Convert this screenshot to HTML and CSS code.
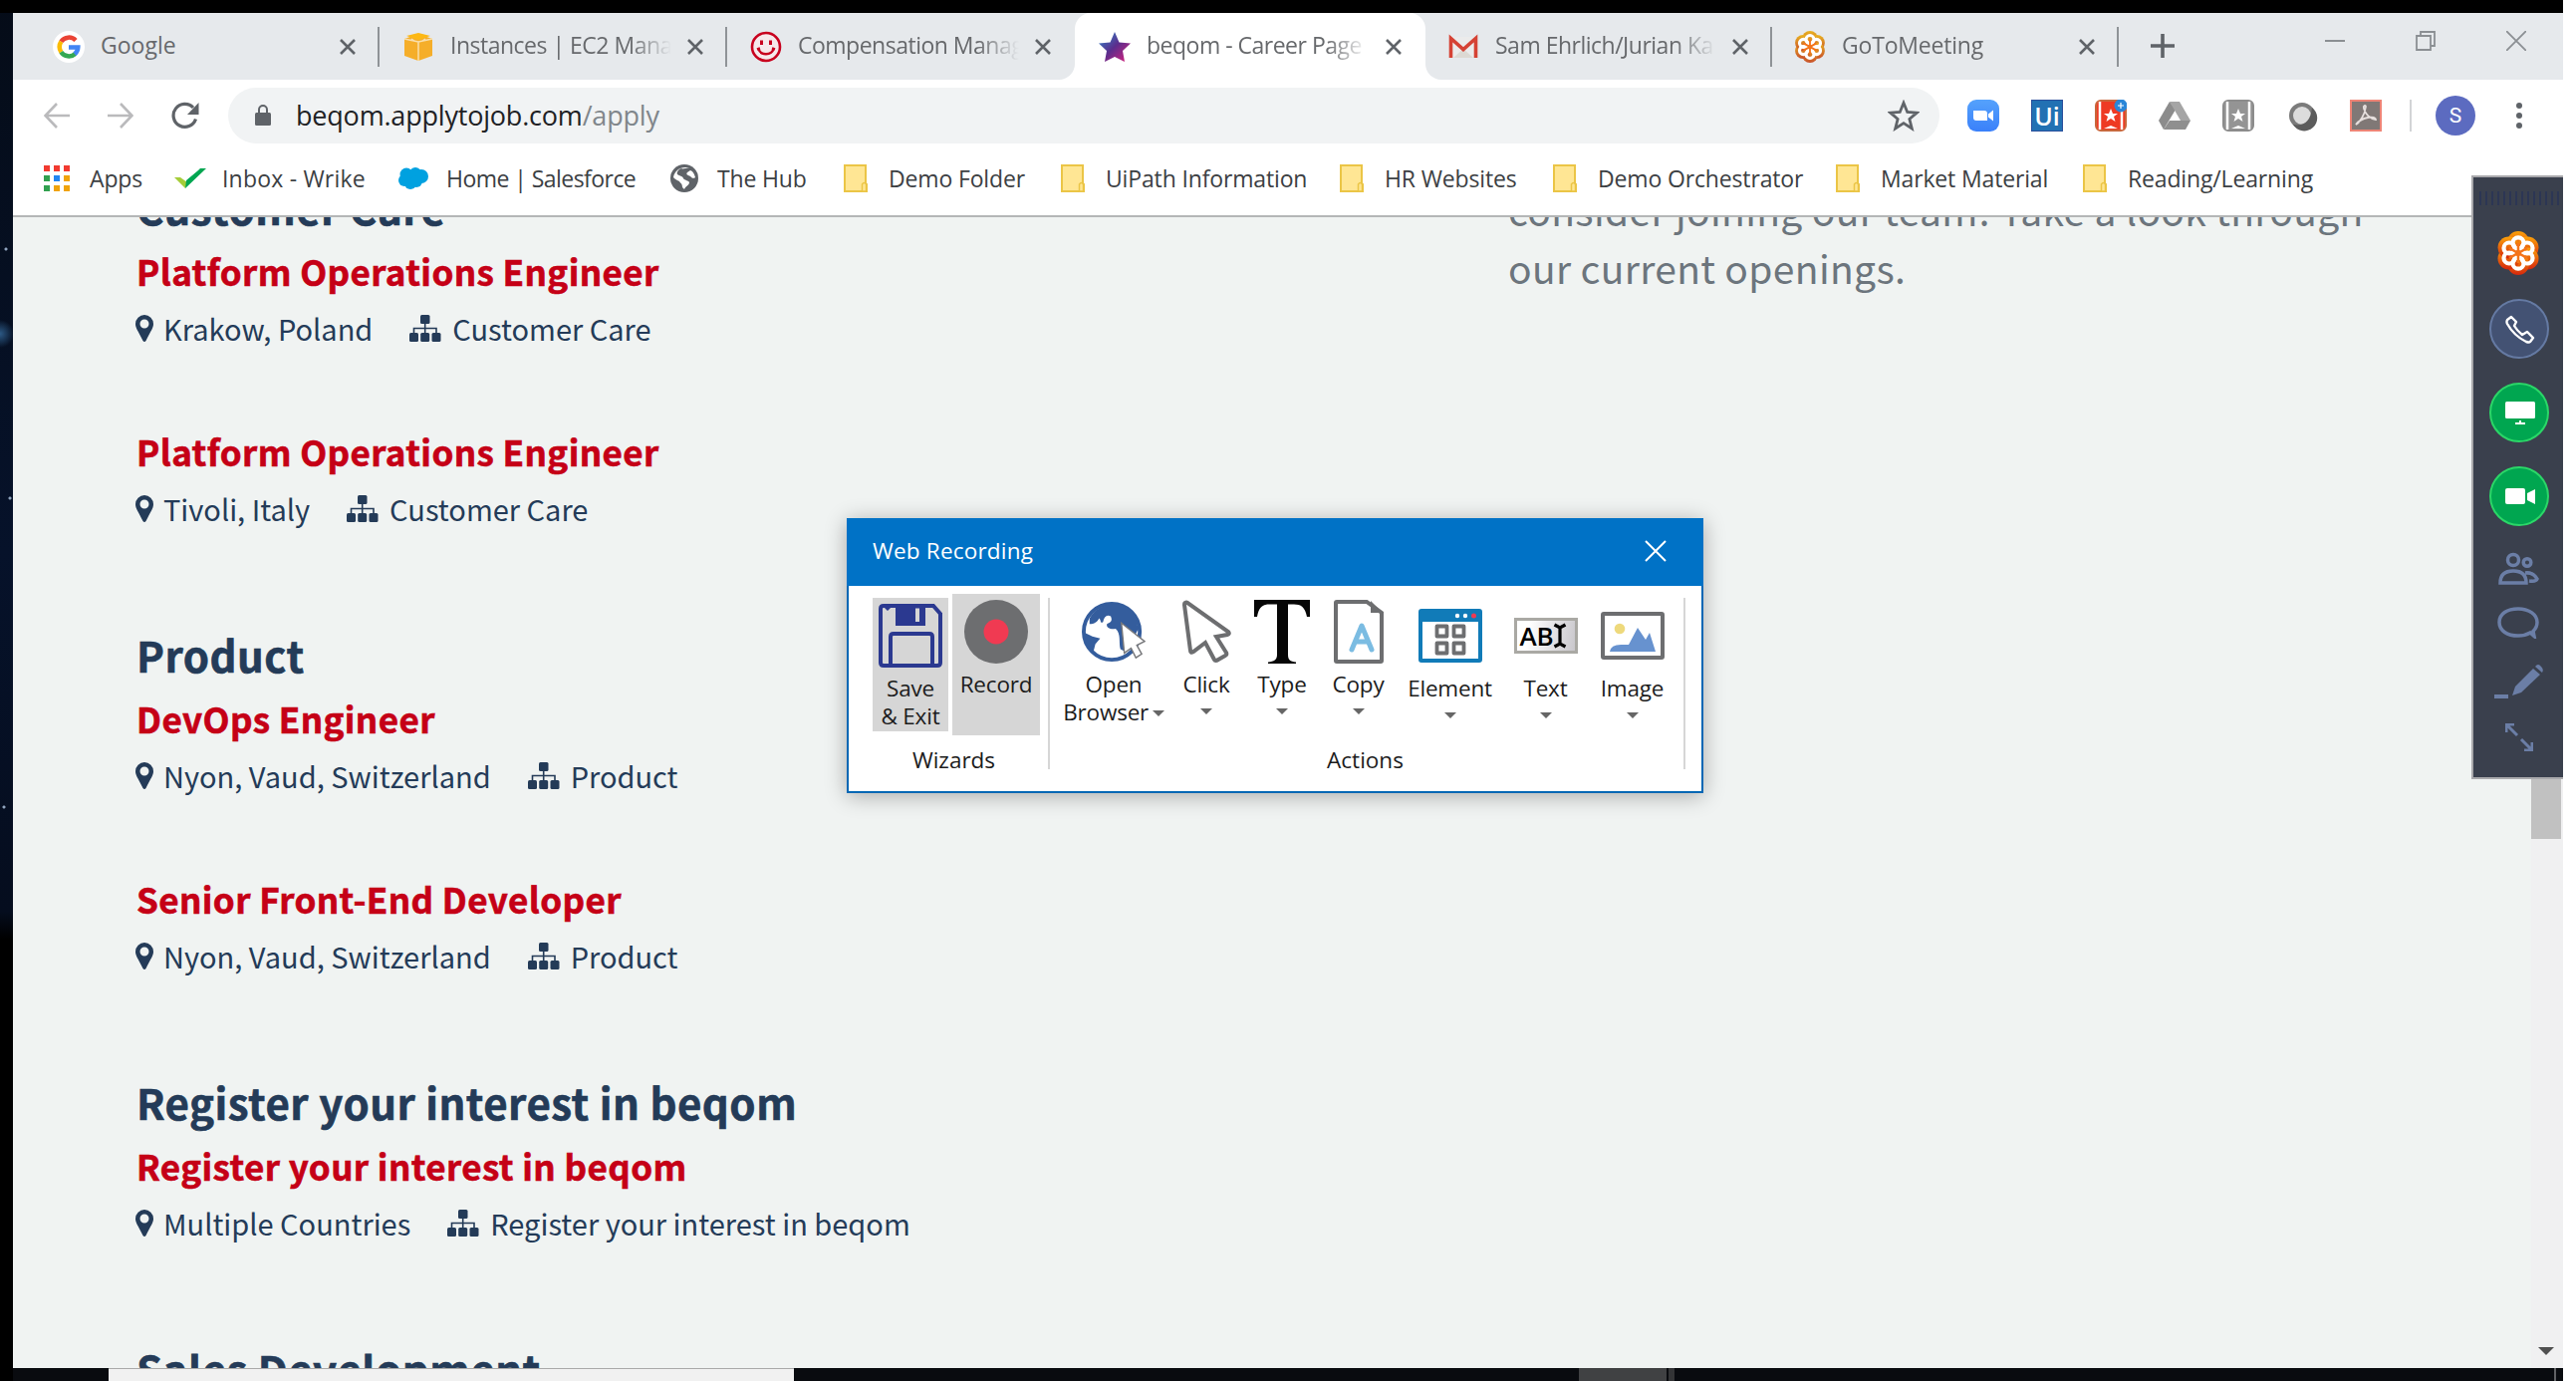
FILE: index.html
```html
<!DOCTYPE html>
<html lang="en">
<head>
<meta charset="utf-8">
<title>beqom - Career Page</title>
<link rel="stylesheet" href="styles.css">
</head>
<body>
<svg class="defs" width="0" height="0">
  <defs>
    <linearGradient id="orange" x1="0" y1="0" x2="0" y2="1"><stop offset="0" stop-color="#fca30a"/><stop offset="1" stop-color="#d5260c"/></linearGradient>
    <linearGradient id="gold" x1="0" y1="0" x2="0" y2="1"><stop offset="0" stop-color="#e9b320"/><stop offset="1" stop-color="#c8502b"/></linearGradient>
    <linearGradient id="purple" x1="0" y1="0" x2="1" y2="1"><stop offset="0" stop-color="#2b8fd0"/><stop offset=".5" stop-color="#5c2d8c"/><stop offset="1" stop-color="#e0207c"/></linearGradient>
    <linearGradient id="blue" x1="0" y1="0" x2="0" y2="1"><stop offset="0" stop-color="#55a2fc"/><stop offset="1" stop-color="#3a80fa"/></linearGradient>
    <symbol id="x" viewBox="0 0 16 16"><path d="M1 1L15 15M15 1L1 15" stroke="#5f6368" stroke-width="2.6"/></symbol>
    <symbol id="folder" viewBox="0 0 24 28"><path d="M1 1h21v18l1 1v7H1z" fill="#ffe694" stroke="#ebc546" stroke-width="2"/><path d="M18.500 27v-7q2-3 4 0v7z" fill="#ffe694" stroke="#ebc546" stroke-width="1.500"/></symbol>
    <symbol id="pin" viewBox="0 0 18 27"><path fill-rule="evenodd" d="M9 0a9 9 0 0 1 9 9c0 4-2 6-7.500 17q-1.500 2-3 0C2 15 0 13 0 9a9 9 0 0 1 9-9zM9 4.500a4.500 4.500 0 1 0 0 9 4.500 4.500 0 0 0 0-9z" fill="#243b58"/></symbol>
    <symbol id="org" viewBox="0 0 32 27"><g fill="#243b58"><rect x="11" y="0" width="9.500" height="9" rx="1.500"/><rect x="0" y="18" width="9" height="9" rx="1.500"/><rect x="11.200" y="18" width="9" height="9" rx="1.500"/><rect x="22.500" y="18" width="9" height="9" rx="1.500"/></g><path d="M15.700 8v10M4.500 18v-4.500h22.500V18" fill="none" stroke="#243b58" stroke-width="1.600"/></symbol>
    <symbol id="daisy" viewBox="0 0 44 44">
      <g><circle cx="22" cy="11" r="11"/><circle cx="31.500" cy="16.500" r="11"/><circle cx="31.500" cy="27.500" r="11"/><circle cx="22" cy="33" r="11"/><circle cx="12.500" cy="27.500" r="11"/><circle cx="12.500" cy="16.500" r="11"/></g>
      <g fill="none" stroke="#fff" stroke-width="4.200"><circle cx="22" cy="11.800" r="5.500"/><circle cx="31" cy="17" r="5.500"/><circle cx="31" cy="27" r="5.500"/><circle cx="22" cy="32.200" r="5.500"/><circle cx="13" cy="27" r="5.500"/><circle cx="13" cy="17" r="5.500"/></g>
      <path d="M22 12V32M13 17l18 10M31 17L13 27" stroke="#f4741a" stroke-width="2.500"/>
    </symbol>
  </defs>
</svg>

<div class="desktop">
<div class="browser">
  <div class="tabs">
    <div class="tab first">
      <svg class="fav" viewBox="0 0 32 32"><circle cx="16" cy="16" r="16" fill="#fff"/><g fill="none" stroke-width="4.500"><path d="M8.300 10.800A9.500 9.500 0 0 1 23 9.500" stroke="#ea4335"/><path d="M8.300 21.200A9.800 9.800 0 0 1 8.300 10.800" stroke="#fbbc05"/><path d="M22.500 23A9.500 9.500 0 0 1 8.300 21.200" stroke="#34a853"/><path d="M16 16.500h9.300A9.500 9.500 0 0 1 22 23.300" stroke="#4285f4"/></g></svg>
      <span class="title">Google</span><svg class="close"><use href="#x"/></svg>
    </div>
    <div class="tab">
      <svg class="fav" viewBox="0 0 32 32"><path d="M2 8l14-5 14 5v17l-14 5-14-5z" fill="#f5ae2a"/><path d="M4 5l12-3 12 3-12 4z" fill="#fdb813"/><path d="M2 8l14 3 14-3M16 11v19M9 8l3 2M23 8l-3 2" stroke="#f9dfac" stroke-width="1.500" fill="none"/></svg>
      <span class="title">Instances | EC2 Mana</span><svg class="close"><use href="#x"/></svg>
    </div>
    <div class="tab nosep">
      <svg class="fav" viewBox="0 0 32 32"><circle cx="16" cy="16" r="14" fill="#f6e9eb" stroke="#c8001e" stroke-width="2.600"/><path d="M11.500 9.500v4.500M20.500 9.500v4.500" stroke="#c8001e" stroke-width="3"/><path d="M8.500 18c2 7 13 7 15 0M7 18.500l3-1M25 18.500l-3-1" fill="none" stroke="#c8001e" stroke-width="2.500"/></svg>
      <span class="title">Compensation Manag</span><svg class="close"><use href="#x"/></svg>
    </div>
    <div class="tab active">
      <svg class="fav" viewBox="0 0 32 32"><path d="M16 1l4.500 10.500L32 12.500l-8 7.500 2 11-10-5-10 5 2-11-8-7.500 11.500-1z" fill="url(#purple)"/></svg>
      <span class="title">beqom - Career Page</span><svg class="close"><use href="#x"/></svg>
    </div>
    <div class="tab">
      <svg class="fav" viewBox="0 0 32 32"><path d="M4 6h24v21H4z" fill="#ebebeb"/><path d="M6 27l10-9 10 9z" fill="#dcd9d3"/><path d="M3.500 27V7.500L16 18.500 28.500 7.500V27" fill="none" stroke="#d54234" stroke-width="3.600"/></svg>
      <span class="title">Sam Ehrlich/Jurian Ka</span><svg class="close"><use href="#x"/></svg>
    </div>
    <div class="tab last">
      <svg class="fav" fill="url(#gold)"><use href="#daisy"/></svg>
      <span class="title">GoToMeeting</span><svg class="close"><use href="#x"/></svg>
    </div>
    <svg class="plus" viewBox="0 0 24 24"><path d="M12 0v24M0 12h24" stroke="#5f6368" stroke-width="3.600"/></svg>
    <div class="winctl">
      <svg viewBox="0 0 20 20"><path d="M0 10h20" stroke="#8b8f93" stroke-width="2"/></svg>
      <svg viewBox="0 0 20 20"><path d="M1 5h14v14H1zM5 5V1h14v14h-4" fill="none" stroke="#8b8f93" stroke-width="1.800"/></svg>
      <svg viewBox="0 0 20 20"><path d="M0 0l20 20M20 0L0 20" stroke="#8b8f93" stroke-width="1.800"/></svg>
    </div>
  </div>

  <div class="toolbar">
    <svg class="nav" viewBox="0 0 26 26"><path d="M26 13H2M13 1L1.500 13 13 25" fill="none" stroke="#bababc" stroke-width="2.600"/></svg>
    <svg class="nav" viewBox="0 0 26 26"><path d="M0 13h24M13 1l11.500 12L13 25" fill="none" stroke="#bababc" stroke-width="2.600"/></svg>
    <svg class="nav reload" viewBox="0 0 28 28"><path d="M24.500 17.500A11.500 11.500 0 1 1 22 6" fill="none" stroke="#5f6368" stroke-width="3.200"/><path d="M27.500 1v12H16z" fill="#5f6368"/></svg>
    <div class="omnibox">
      <svg class="lock" viewBox="0 0 16 22"><rect y="8" width="16" height="13" rx="1.500" fill="#5f6368"/><path d="M4 9V5a4 4 0 0 1 8 0v4" fill="none" stroke="#5f6368" stroke-width="2"/></svg>
      <span class="url"><b>beqom.applytojob.com</b>/apply</span>
      <svg class="star" viewBox="0 0 30 30"><path d="M15 3l3.500 8.700 9 .6-7 5.900 2.300 9L15 22.200 7.200 27.200l2.300-9-7-5.900 9-.6z" fill="none" stroke="#5f6368" stroke-width="2.600"/></svg>
    </div>
    <div class="exts">
      <svg viewBox="0 0 32 32"><rect width="32" height="32" rx="9" fill="url(#blue)"/><path d="M6 11h11q3 0 3 3v7H9q-3 0-3-3zM21 14.500l5-4v11l-5-4z" fill="#fff"/></svg>
      <span class="ui">Ui</span>
      <svg viewBox="0 0 32 32"><rect x="1" y="1" width="30" height="30" rx="5" fill="#ee3a23" stroke="#c9673c" stroke-width="2"/><path d="M5 2v28M27 2v28" stroke="#fff" stroke-width="2.500"/><path d="M16 9l2 5h5l-4 3 1.500 5-4.500-3-4.500 3L13 17l-4-3h5zM9 29l7-3 7 3z" fill="#fff"/><circle cx="26" cy="6" r="6.500" fill="#2a86d8"/><path d="M26 3v6M23 6h6" stroke="#fff" stroke-width="1.200"/></svg>
      <svg viewBox="0 0 32 32"><path d="M11 2L0 21l5 9L17 10z" fill="#8c8c8c"/><path d="M11 2h10l11 19H22z" fill="#a5a5a5"/><path d="M5 30l6-9h21l-5 9z" fill="#8f8f8f"/></svg>
      <svg viewBox="0 0 32 32"><rect x="1" y="1" width="30" height="30" rx="5" fill="#949494" stroke="#8c8c8c" stroke-width="2"/><path d="M5 2v28M27 2v28" stroke="#fff" stroke-width="2.500"/><path d="M16 9l2 5h5l-4 3 1.500 5-4.500-3-4.500 3L13 17l-4-3h5zM9 29l7-3 7 3z" fill="#fff"/></svg>
      <svg viewBox="0 0 32 32"><circle cx="16" cy="16" r="11" fill="#dcdcdc" stroke="#7b7b7b" stroke-width="4"/><path d="M26 8a13 13 0 1 1-19 17q17 3 19-17z" fill="#5c5c5c"/></svg>
      <svg viewBox="0 0 32 32"><rect x="1" y="1" width="30" height="30" fill="#807876" stroke="#ee8476" stroke-width="2"/><path d="M6 25c4-2 9-10 10-18 0-2-3-1-2 2 2 6 6 10 12 11 0-2-3-3-8-2s-9 3-12 7z" fill="none" stroke="#e6dfdd" stroke-width="1.800"/></svg>
      <i class="divider"></i>
      <span class="avatar">S</span>
      <svg class="dots" viewBox="0 0 6 28"><g fill="#5f6368"><circle cx="3" cy="4" r="3"/><circle cx="3" cy="14" r="3"/><circle cx="3" cy="24" r="3"/></g></svg>
    </div>
  </div>

  <div class="bookmarks">
    <svg class="b1" viewBox="0 0 26 26"><path d="M0 0h6v6H0zM10 0h6v6h-6zM20 0h6v6h-6z" fill="#f23a30"/><path d="M0 10h6v6H0zM0 20h6v6H0z" fill="#31a04f"/><path d="M10 10h6v6h-6z" fill="#2286f2"/><path d="M20 10h6v6h-6zM10 20h6v6h-6zM20 20h6v6h-6z" fill="#f0a30a"/></svg><span>Apps</span>
    <svg class="b2" viewBox="0 0 32 20"><path d="M0 9h6l7 5-2 6z" fill="#a5cd39"/><path d="M11 20l1-8L24 2l2-2h6z" fill="#00a651"/></svg><span class="wide">Inbox - Wrike</span>
    <svg class="b3" viewBox="0 0 30 22"><g fill="#00a1e0"><circle cx="8" cy="7" r="6.500"/><circle cx="17" cy="6" r="6"/><circle cx="23" cy="9" r="7"/><circle cx="6" cy="13" r="6"/><circle cx="12" cy="16" r="6"/><circle cx="18" cy="14" r="6"/></g></svg><span class="narrow">Home | Salesforce</span>
    <svg class="b4" viewBox="0 0 28 28"><circle cx="14" cy="14" r="14" fill="#5f6368"/><path d="M19 3c-4 1-7 2-8 1-3 1-5 4-4 6 2 2 5 1 6 4 1 2 5 2 6 4 0 3-4 4-5 7l-2-2c0-4-2-4-3-6-3-1-5-3-6-4 1-6 6-10 12-10zM20 6c3 1 4 4 5 7-2 2-4 0-5-1-2-1-5-2-3-4z" fill="#fff"/></svg><span>The Hub</span>
    <svg class="f"><use href="#folder"/></svg><span>Demo Folder</span>
    <svg class="f"><use href="#folder"/></svg><span>UiPath Information</span>
    <svg class="f"><use href="#folder"/></svg><span>HR Websites</span>
    <svg class="f"><use href="#folder"/></svg><span>Demo Orchestrator</span>
    <svg class="f"><use href="#folder"/></svg><span>Market Material</span>
    <svg class="f"><use href="#folder"/></svg><span>Reading/Learning</span>
    <span class="more">»</span>
  </div>

  <div class="page">
    <main class="jobs">
      <section>
        <h2>Customer Care</h2>
        <article><h3>Platform Operations Engineer</h3><p><svg class="pin"><use href="#pin"/></svg><span>Krakow, Poland</span><svg class="org"><use href="#org"/></svg><span>Customer Care</span></p></article>
        <article><h3>Platform Operations Engineer</h3><p><svg class="pin"><use href="#pin"/></svg><span>Tivoli, Italy</span><svg class="org"><use href="#org"/></svg><span>Customer Care</span></p></article>
      </section>
      <section>
        <h2>Product</h2>
        <article><h3>DevOps Engineer</h3><p><svg class="pin"><use href="#pin"/></svg><span>Nyon, Vaud, Switzerland</span><svg class="org"><use href="#org"/></svg><span>Product</span></p></article>
        <article><h3>Senior Front-End Developer</h3><p><svg class="pin"><use href="#pin"/></svg><span>Nyon, Vaud, Switzerland</span><svg class="org"><use href="#org"/></svg><span>Product</span></p></article>
      </section>
      <section>
        <h2>Register your interest in beqom</h2>
        <article><h3>Register your interest in beqom</h3><p><svg class="pin"><use href="#pin"/></svg><span>Multiple Countries</span><svg class="org"><use href="#org"/></svg><span>Register your interest in beqom</span></p></article>
      </section>
      <section>
        <h2>Sales Development</h2>
      </section>
    </main>
    <aside class="intro">consider joining our team! Take a look through<br>our current openings.</aside>
    <div class="scrollbar"><i class="thumb"></i><i class="down"></i></div>
  </div>
</div>
<div class="taskbar"><i class="t1"></i><i class="t2"></i><i class="t3"></i><i class="t4"></i></div>
</div>

<div class="dialog">
  <header><span>Web Recording</span><svg viewBox="0 0 22 22"><path d="M1 1l20 20M21 1L1 21" stroke="#fff" stroke-width="2"/></svg></header>
  <div class="ribbon">
    <div class="group wizards">
      <div class="items">
        <div class="cmd save">
          <svg viewBox="0 0 64 64"><path d="M5 2h50l7 8v49q0 3-3 3H5q-3 0-3-3V5q0-3 3-3z" fill="none" stroke="#2b3990" stroke-width="4"/><path d="M17 2h30v20H17zM4 2h10L9 7z" fill="#2b3990"/><path d="M37 4.500h4V18h-4z" fill="#d6d6d6"/><path d="M12 62V33q0-3 3-3h36q3 0 3 3v29" fill="none" stroke="#2b3990" stroke-width="4"/></svg>
          <span>Save<br>&amp; Exit</span>
        </div>
        <div class="cmd record">
          <svg viewBox="0 0 64 64"><circle cx="32" cy="32" r="32" fill="#6d6e70"/><circle cx="32" cy="32" r="12.500" fill="#f03a52"/></svg>
          <span>Record</span>
        </div>
      </div>
      <div class="caption">Wizards</div>
    </div>
    <div class="group actions">
      <div class="items">
        <div class="cmd open">
          <svg viewBox="0 0 66 64"><circle cx="31" cy="32" r="29" fill="#fff" stroke="#345d9d" stroke-width="4"/><path d="M8 18C15 6 26 3 36 4c13 1 22 11 22 26l-7 14-7-8v16l-4-2c-2-6 1-16-5-21-5 1-10-1-9-5 4-2 6-3 4-8-4-2-7 0-8 6-3 2-2-2-4-4-2 4-5 6-10 6zM3 33l8 4 8 2-5 6-2 8C6 49 3 40 3 33z" fill="#345d9d"/><path d="M41 23l3 31 7-5 5 10 6-4-5-9 8-4z" fill="#fff" stroke="#77787b" stroke-width="1.500"/></svg>
          <span>Open<br>Browser <i class="arrow"></i></span>
        </div>
        <div class="cmd click">
          <svg viewBox="0 0 64 64"><path d="M11 3q-1 0-1 2l6 46q0 3 3 1l12-9 9 17q1 2 4 0l7-4q2-1 1-3l-10-16 11-2q3-1 1-3L13 3q-1-1-2 0z" fill="#fff" stroke="#6d6e70" stroke-width="4"/></svg>
          <span>Click</span><i class="arrow"></i>
        </div>
        <div class="cmd type">
          <svg viewBox="0 0 64 64"><path d="M4 0h56v17h-3C55 7 51 4.500 44 4.500h-6V55c0 5 2 7 8 7.500V64H18v-1.500c6-.5 9-2.500 9-7.500V4.500h-7C12 4.500 9 7 7 17H4z" fill="#060606"/></svg>
          <span>Type</span><i class="arrow"></i>
        </div>
        <div class="cmd copy">
          <svg viewBox="0 0 64 64"><path d="M10 2h30l15 11v48q0 1-1 1H10q-1 0-1-1V3q0-1 1-1z" fill="#fff" stroke="#6d6e70" stroke-width="4"/><path d="M44 1v12h12z" fill="#6d6e70"/><path d="M25 50l10-24 10 24M29 42h12" fill="none" stroke="#7bbce2" stroke-width="5" stroke-linecap="round" stroke-linejoin="round"/></svg>
          <span>Copy</span><i class="arrow"></i>
        </div>
        <div class="cmd low element">
          <svg viewBox="0 0 64 64"><rect x="2" y="7" width="60" height="50" rx="1" fill="#fff" stroke="#117bb8" stroke-width="4"/><path d="M1 6h62v12H1z" fill="#117bb8"/><circle cx="39" cy="12" r="2.200" fill="#fff"/><circle cx="47" cy="12" r="2.200" fill="#fff"/><circle cx="55.500" cy="12" r="2.500" fill="#f03a52"/><path d="M18.500 22.500h10v10h-10zM35.500 22.500h10v10h-10zM18.500 39.500h10v10h-10zM35.500 39.500h10v10h-10z" fill="none" stroke="#6d6e70" stroke-width="3.800" stroke-linejoin="round"/></svg>
          <span>Element</span><i class="arrow"></i>
        </div>
        <div class="cmd low text">
          <div class="abi"><b>AB</b><svg viewBox="0 0 14 28"><path d="M1.500 3L7 6l5.500-3M1.500 25L7 22l5.500 3M7 5v18" fill="none" stroke="#000" stroke-width="3.200"/></svg></div>
          <span>Text</span><i class="arrow"></i>
        </div>
        <div class="cmd low image">
          <svg viewBox="0 0 64 64"><rect x="2" y="10" width="60" height="44" rx="1" fill="#fff" stroke="#6d6e70" stroke-width="4"/><circle cx="19" cy="25" r="5.300" fill="#eed97c"/><path d="M9 48q1-8 14-7h5l9-17 8 12 4-7 6 19z" fill="#6792cf"/></svg>
          <span>Image</span><i class="arrow"></i>
        </div>
      </div>
      <div class="caption">Actions</div>
    </div>
  </div>
</div>

<div class="panel">
  <i class="grip"></i>
  <svg class="logo" fill="url(#orange)"><use href="#daisy"/></svg>
  <svg class="round" viewBox="0 0 60 60"><circle cx="30" cy="30" r="29" fill="#435273" stroke="#657aa3" stroke-width="2"/><path d="M22 18l-4 3q-1 2 0 4c5 9 11 14 19 18q3 1 4 0l3-4-6-6-5 3q-5-4-8-9l2-4z" fill="none" stroke="#fff" stroke-width="2.400" stroke-linejoin="round"/></svg>
  <svg class="round" viewBox="0 0 60 60"><circle cx="30" cy="30" r="29" fill="#00a650" stroke="#2bd768" stroke-width="2"/><rect x="16" y="19" width="30" height="17" rx="1.500" fill="#fff"/><path d="M30 38h2v2h4v2H26v-2h4z" fill="#fff"/></svg>
  <svg class="round" viewBox="0 0 60 60"><circle cx="30" cy="30" r="29" fill="#00a650" stroke="#2bd768" stroke-width="2"/><rect x="16" y="22" width="20" height="16" rx="2" fill="#fff"/><path d="M38 27l8-4v15l-8-4z" fill="#fff"/></svg>
  <svg class="people" viewBox="0 0 42 34"><g fill="none" stroke="#6b7ea6" stroke-width="3.500"><circle cx="15" cy="8" r="5.500"/><circle cx="29" cy="10.500" r="3.800"/><path d="M2 31q0-12 13-12t13 12zM27 21q8-1 12 6-1 3-8 2"/></g></svg>
  <svg class="bubble" viewBox="0 0 42 32"><path d="M33 26Q28 29 21 29C10 29 2 24 2 15.500S10 2 21 2s19 6 19 13.500q0 5-4 9l1 5z" fill="none" stroke="#6b7ea6" stroke-width="3.500"/></svg>
  <svg class="pencil" viewBox="0 0 50 36"><path d="M0 31h14v4H0zM18 32l3-9L39 5l7 6-19 18zM41 3q3-4 6 0 3 3 1 6z" fill="#6b7ea6"/></svg>
  <svg class="expand" viewBox="0 0 28 28"><path d="M1 9V1h8M2 2l10 10M27 19v8h-8M26 26L16 16" fill="none" stroke="#6b7ea6" stroke-width="3"/></svg>
</div>
</body>
</html>
```
FILE: styles.css
```css
* { box-sizing: border-box; }
body { margin: 0; width: 2586px; height: 1386px; overflow: hidden; background: #fff; font-family: "Open Sans", "Noto Sans", sans-serif; position: relative; }
svg { display: block; flex: none; }
i { display: block; }
.defs { position: absolute; }

.desktop { width: 2573px; height: 1386px; padding: 13px 0 0 13px; background:
  linear-gradient(#000 13px, transparent 13px),
  radial-gradient(circle at 0 335px, #2d5a86, transparent 14px),
  radial-gradient(circle at 6px 250px, #8fa3bd 1px, transparent 2px),
  radial-gradient(circle at 10px 500px, #8fa3bd 1px, transparent 2px),
  radial-gradient(circle at 4px 810px, #8fa3bd 1px, transparent 2px),
  linear-gradient(#050c18, #06122a 40%, #050d1e 66%, #000 68%); }
.browser { width: 2560px; height: 1360px; display: flex; flex-direction: column; background: #fff; overflow: hidden; }

/* tab strip */
.tabs { height: 67px; flex: none; display: flex; align-items: stretch; background: linear-gradient(#e6e9ec, #e6e9ec) 0 0 / 100% 50px no-repeat, linear-gradient(90deg, #e6e9ec 1040px, #fff 1040px, #fff 1440px, #e6e9ec 1440px); }
.tab { width: 349px; height: 67px; display: flex; align-items: center; padding: 0 22px 0 23px; color: #67696c; font-size: 23px; letter-spacing: -.5px; background: linear-gradient(#8f9397, #8f9397) right 14px / 2px 40px no-repeat; flex: none; }
.tab.first { width: 368px; padding-left: 40px; letter-spacing: 0; }
.tab.nosep { background: #e6e9ec; border-radius: 0 0 16px 0; }
.tab.active { width: 352px; background: #fff; border-radius: 16px 16px 0 0; padding-left: 24px; }
.tab.active + .tab { width: 348px; padding-left: 22px; border-radius: 0 0 0 16px; background-color: #e6e9ec; }
.tab.last { width: 348px; padding-left: 22px; letter-spacing: -.2px; }
.fav { width: 32px; height: 32px; }
.title { flex: 1; margin: 0 12px 3px 16px; white-space: nowrap; overflow: hidden; mask-image: linear-gradient(90deg, #000 180px, transparent 222px); }
.first .title { mask-image: none; }
.close { width: 16px; height: 16px; margin-right: 2px; }
.plus { width: 24px; height: 24px; margin: 21px 0 0 32px; }
.winctl { display: flex; gap: 71px; margin: 18px 0 0 151px; }
.winctl svg { width: 20px; height: 20px; }

/* toolbar */
.toolbar { height: 71px; flex: none; display: flex; align-items: center; padding: 0 0 0 31px; }
.nav { width: 26px; height: 26px; margin-right: 38px; }
.nav.reload { width: 28px; height: 28px; margin-right: 29px; }
.omnibox { width: 1718px; height: 56px; margin-top: 1px; border-radius: 28px; background: #f1f3f4; display: flex; align-items: center; padding: 0 20px 0 27px; }
.lock { width: 16px; height: 22px; margin-right: 25px; }
.url { flex: 1; font-size: 27px; letter-spacing: -.2px; color: #80868b; margin-top: -2px; }
.url b { font-weight: 400; color: #202124; }
.star { width: 32px; height: 32px; }
.exts { display: flex; align-items: center; gap: 32px; margin-left: 28px; }
.exts > svg { width: 32px; height: 32px; }
.ui { width: 32px; height: 32px; background: #2271b3; border: 1px solid #2a4f9c; color: #fff; font: 600 25px/30px "Open Sans", sans-serif; text-align: center; }
.divider { width: 2px; height: 32px; background: #d2d4d6; margin-left: -4px; }
.avatar { width: 40px; height: 40px; border-radius: 50%; background: #5c6bc0; color: #fff; font: 21px/40px Roboto, sans-serif; text-align: center; margin-left: -8px; }
.exts > .dots { width: 6px; height: 28px; margin-left: 9px; }

/* bookmarks */
.bookmarks { height: 67px; flex: none; display: grid; grid-template-columns: 46px 85px 48px 177px 48px 225px 47px 127px 45px 173px 45px 235px 45px 169px 45px 239px 45px 203px 45px 378px 60px; align-items: center; padding: 0 0 9px 31px; border-bottom: 2px solid #b4b6b7; font-size: 23px; letter-spacing: -.15px; color: #3c4043; white-space: nowrap; }
.bookmarks span { margin-top: -1px; }
.bookmarks .wide { letter-spacing: .2px; }
.bookmarks .narrow { letter-spacing: -.55px; }
.b1 { width: 26px; height: 26px; } .b2 { width: 32px; height: 20px; } .b3 { width: 30px; height: 22px; } .b4 { width: 28px; height: 28px; } .f { width: 24px; height: 28px; }

/* career page */
.page { flex: 1; min-height: 0; display: flex; background: #f0f3f2; overflow: hidden; font-family: "Noto Sans CJK SC", sans-serif; }
.jobs { width: 1501px; padding-left: 124px; margin-top: -40px; color: #243b58; }
section { padding-bottom: 18px; }
h2, h3 { font-weight: 700; -webkit-text-stroke: .6px currentColor; }
h2 { margin: 0 0 9px; font-size: 42px; line-height: 60px; letter-spacing: .48px; }
article { height: 181px; }
h3 { margin: 0 0 10px; font-size: 35px; line-height: 50px; letter-spacing: .4px; color: #c50016; }
.jobs p { margin: 0; font-size: 29px; line-height: 44px; display: flex; white-space: nowrap; }
.pin { width: 18px; height: 27px; margin: 9px 10px 0 -1px; }
.org { width: 32px; height: 27px; margin: 9px 11px 0 37px; }
.intro { width: 1027px; margin-top: -37px; font-size: 39px; line-height: 58px; letter-spacing: .33px; color: #6c757d; white-space: nowrap; }
.scrollbar { width: 32px; background: #f0f0f1; display: flex; flex-direction: column; }
.thumb { width: 30px; height: 60px; margin-top: 564px; background: #c1c1c1; }
.down { margin: auto 0 13px 7px; width: 0; border: 8px solid transparent; border-top: 8px solid #505050; border-bottom: 0; }

.taskbar { height: 13px; display: flex; background: #090b0f; }
.t1 { width: 688px; margin-left: 96px; background: #f1f1f1; border-top: 1px solid #aaa; }
.t2 { width: 88px; margin-left: 788px; background: #404143; }
.t3 { width: 6px; margin-left: 2px; background: #333436; }
.t4 { width: 2px; margin-left: 883px; background: #606164; }

/* floating recorder window */
.dialog { position: absolute; left: 850px; top: 520px; width: 860px; height: 276px; background: #fff; border: 2px solid #0067b4; box-shadow: 0 3px 20px rgba(0,0,0,.3); color: #1c1c1c; font-size: 22.500px; line-height: 28px; }
.dialog header { height: 68px; margin: -2px -2px 0; padding: 2px 37px 4px 26px; background: #0072c6; color: #fff; display: flex; align-items: center; justify-content: space-between; letter-spacing: .2px; }
.dialog header svg { width: 22px; height: 22px; }
.ribbon { display: flex; padding: 8px 16px 0 14px; }
.group { height: 176px; display: flex; flex-direction: column; background: linear-gradient(#d6d6d6, #d6d6d6) right 4px / 2px 172px no-repeat; }
.wizards { width: 188px; }
.actions { width: 638px; }
.items { display: flex; height: 148px; }
.caption { text-align: center; height: 28px; line-height: 38px; padding-right: 5px; }
.cmd { display: flex; flex-direction: column; align-items: center; text-align: center; padding-top: 6px; white-space: nowrap; flex: none; letter-spacing: -.2px; }
.cmd > svg { width: 64px; height: 64px; margin-bottom: 7px; }
.arrow { width: 0; border: 6px solid transparent; border-top: 6px solid #666; border-bottom: 0; margin-top: 10px; }
.save { width: 76px; height: 134px; margin: 4px 4px 0 10px; background: #d6d6d6; }
.record { width: 88px; height: 142px; background: #d6d6d6; }
.open { width: 104px; margin-left: 12px; }
.open .arrow { display: inline-block; vertical-align: 4px; margin: 0 0 0 -2px; }
.click { width: 82px; }
.type { width: 70px; }
.copy { width: 83px; }
.element { width: 101px; } .text { width: 91px; } .image { width: 83px; }
.low { padding-top: 10px; }
.abi { width: 64px; height: 36px; margin: 14px 0 21px; border: 3px solid #aaa9a4; background: linear-gradient(100deg, #fff 20%, #c9c7cc); display: flex; align-items: center; padding-left: 3px; color: #000; }
.abi b { font: 600 26px/30px "Open Sans", sans-serif; letter-spacing: -.2px; }
.abi svg { width: 14px; height: 28px; }

/* meeting control panel */
.panel { position: absolute; left: 2481px; top: 176px; width: 92px; height: 606px; border: 2px solid #a9a9ac; border-right: 0; background: #3a404d; display: flex; flex-direction: column; align-items: center; padding: 14px 0 0 2px; }
.grip { width: 82px; height: 14px; margin-left: 2px; background: repeating-linear-gradient(90deg, #2c3654 0 2px, transparent 2px 6px); }
.logo { width: 44px; height: 44px; margin: 26px 2px 24px 0; }
.round { width: 60px; height: 60px; margin-bottom: 24px; }
.people { width: 42px; height: 34px; margin: 2px 0 21px; }
.bubble { width: 42px; height: 32px; margin-bottom: 25px; margin-right: 2px; }
.pencil { width: 50px; height: 36px; margin-bottom: 24px; }
.expand { width: 28px; height: 28px; }
```
